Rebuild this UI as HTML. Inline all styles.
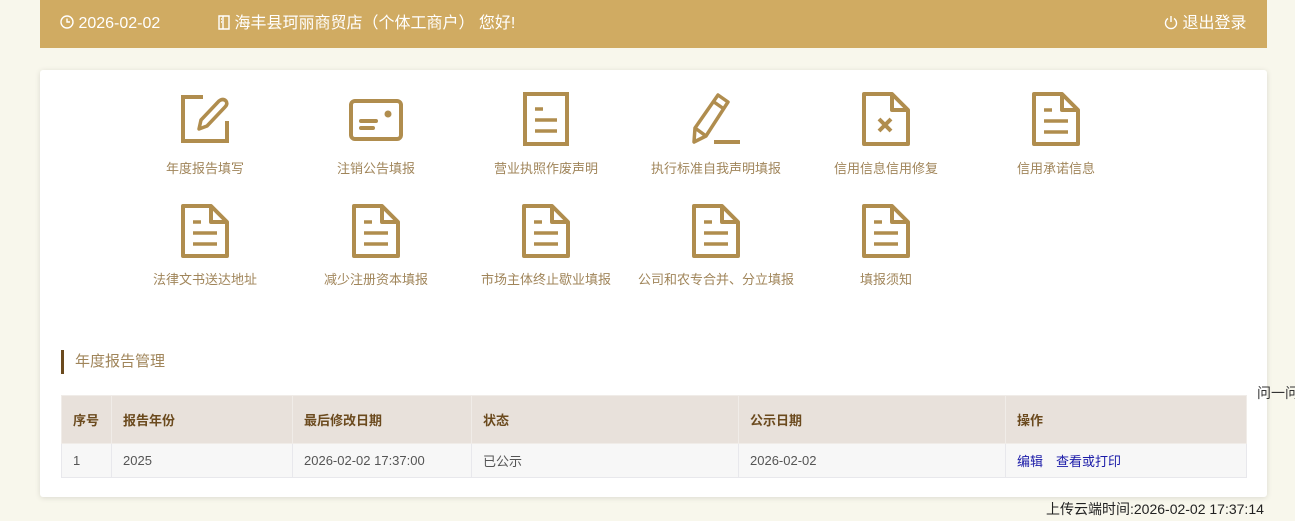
<!DOCTYPE html>
<html><head><meta charset="utf-8"><style>
*{margin:0;padding:0;box-sizing:border-box}
body{width:1295px;height:521px;background:#f8f7ec;font-family:"Liberation Sans","Microsoft YaHei","Noto Sans CJK SC",sans-serif;position:relative;overflow:hidden}
.hd{position:absolute;left:40px;top:0;width:1227px;height:48px;background:#d0ab62;color:#fff;font-size:16px}
.hd span{position:absolute;top:14px;line-height:20px}
.card{position:absolute;left:40px;top:70px;width:1227px;height:427px;background:#fff;border-radius:3px;box-shadow:0 1px 6px rgba(0,0,0,.12)}
.it{position:absolute;width:170px;text-align:center;color:#a0855a;font-size:13px}
.it svg{display:block;margin:0 auto}
.it .lb{position:absolute;left:0;width:170px;text-align:center}
.sec{position:absolute;left:21px;top:280px;height:24px;border-left:3px solid #6b4a1e;padding-left:11px;font-size:15px;color:#a0855a;line-height:24px}
table{position:absolute;left:21px;top:325px;border-collapse:collapse;font-size:13px}
th{background:#e8e1db;color:#6b4a1e;text-align:left;font-weight:bold;height:48px;padding-left:11px;border:1px solid #f0ece8}
td{background:#f7f7f7;color:#555;height:34px;padding-left:11px;border:1px solid #e8e8ec}
a{color:#1a1aa8;text-decoration:none;margin-right:13px}
</style></head><body>
<div class="hd">
<span style="left:20px"><svg width="14" height="14" viewBox="0 0 14 14" style="vertical-align:-1px"><circle cx="7" cy="7" r="6" fill="none" stroke="#fff" stroke-width="1.4"/><path d="M7 3.5V7H10" fill="none" stroke="#fff" stroke-width="1.4"/></svg> 2026-02-02</span>
<span style="left:178px"><svg width="12" height="15" viewBox="0 0 12 15" style="vertical-align:-2px"><path d="M1 1H11V14H1Z M5 1V14 M3 4H4 M3 7H4" fill="none" stroke="#fff" stroke-width="1.4"/></svg> 海丰县珂丽商贸店（个体工商户） 您好!</span>
<span style="left:1124px"><svg width="14" height="15" viewBox="0 0 14 15" style="vertical-align:-2px"><path d="M4 3.5A5.5 5.5 0 1 0 10 3.5 M7 1V7" fill="none" stroke="#fff" stroke-width="1.4"/></svg> 退出登录</span>
</div>
<div class="card">
<div class="it" style="left:80px;top:25px"><svg width="48" height="48" viewBox="0 0 48 48"><path d="M22 2H2V46H46V26" fill="none" stroke="#b08d4e" stroke-width="4"/><path d="M18 34L20 25L38 6Q42 3 45 6Q47 9 44 12L26 31Z" fill="none" stroke="#b08d4e" stroke-width="3.5" stroke-linejoin="round"/></svg><div class="lb" style="top:63px">年度报告填写</div></div>
<div class="it" style="left:251px;top:29px"><svg width="54" height="42" viewBox="0 0 54 42"><rect x="2" y="2" width="50" height="38" rx="4" fill="none" stroke="#b08d4e" stroke-width="4"/><path d="M12 22H27M12 29H24" stroke="#b08d4e" stroke-width="4" stroke-linecap="round"/><circle cx="39" cy="15" r="3.5" fill="#b08d4e"/></svg><div class="lb" style="top:59px">注销公告填报</div></div>
<div class="it" style="left:421px;top:22px"><svg width="46" height="54" viewBox="0 0 46 54"><rect x="2" y="2" width="42" height="50" fill="none" stroke="#b08d4e" stroke-width="4"/><path d="M12 17H20M12 28H34M12 39H34" stroke="#b08d4e" stroke-width="3.5"/></svg><div class="lb" style="top:66px">营业执照作废声明</div></div>
<div class="it" style="left:591px;top:22px"><svg width="52" height="54" viewBox="0 0 52 54"><path d="M28 3L38 10L16 44L4 50L5 36Z M5 36L16 44 M24 10L34 17" fill="none" stroke="#b08d4e" stroke-width="3.5" stroke-linejoin="round"/><path d="M24 50H50" stroke="#b08d4e" stroke-width="4"/></svg><div class="lb" style="top:66px">执行标准自我声明填报</div></div>
<div class="it" style="left:761px;top:22px"><svg width="48" height="54" viewBox="0 0 48 54"><path d="M2 2H30L46 18V52H2Z M30 2V18H46" fill="none" stroke="#b08d4e" stroke-width="4" stroke-linejoin="round"/><path d="M17 27L29 39M29 27L17 39" stroke="#b08d4e" stroke-width="4"/></svg><div class="lb" style="top:66px">信用信息信用修复</div></div>
<div class="it" style="left:931px;top:22px"><svg width="48" height="54" viewBox="0 0 48 54"><path d="M2 2H30L46 18V52H2Z M30 2V18H46" fill="none" stroke="#b08d4e" stroke-width="4" stroke-linejoin="round"/><path d="M12 18H20M12 29H36M12 40H36" stroke="#b08d4e" stroke-width="3.5"/></svg><div class="lb" style="top:66px">信用承诺信息</div></div>
<div class="it" style="left:80px;top:134px"><svg width="48" height="54" viewBox="0 0 48 54"><path d="M2 2H30L46 18V52H2Z M30 2V18H46" fill="none" stroke="#b08d4e" stroke-width="4" stroke-linejoin="round"/><path d="M12 18H20M12 29H36M12 40H36" stroke="#b08d4e" stroke-width="3.5"/></svg><div class="lb" style="top:65px">法律文书送达地址</div></div>
<div class="it" style="left:251px;top:134px"><svg width="48" height="54" viewBox="0 0 48 54"><path d="M2 2H30L46 18V52H2Z M30 2V18H46" fill="none" stroke="#b08d4e" stroke-width="4" stroke-linejoin="round"/><path d="M12 18H20M12 29H36M12 40H36" stroke="#b08d4e" stroke-width="3.5"/></svg><div class="lb" style="top:65px">减少注册资本填报</div></div>
<div class="it" style="left:421px;top:134px"><svg width="48" height="54" viewBox="0 0 48 54"><path d="M2 2H30L46 18V52H2Z M30 2V18H46" fill="none" stroke="#b08d4e" stroke-width="4" stroke-linejoin="round"/><path d="M12 18H20M12 29H36M12 40H36" stroke="#b08d4e" stroke-width="3.5"/></svg><div class="lb" style="top:65px">市场主体终止歇业填报</div></div>
<div class="it" style="left:591px;top:134px"><svg width="48" height="54" viewBox="0 0 48 54"><path d="M2 2H30L46 18V52H2Z M30 2V18H46" fill="none" stroke="#b08d4e" stroke-width="4" stroke-linejoin="round"/><path d="M12 18H20M12 29H36M12 40H36" stroke="#b08d4e" stroke-width="3.5"/></svg><div class="lb" style="top:65px">公司和农专合并、分立填报</div></div>
<div class="it" style="left:761px;top:134px"><svg width="48" height="54" viewBox="0 0 48 54"><path d="M2 2H30L46 18V52H2Z M30 2V18H46" fill="none" stroke="#b08d4e" stroke-width="4" stroke-linejoin="round"/><path d="M12 18H20M12 29H36M12 40H36" stroke="#b08d4e" stroke-width="3.5"/></svg><div class="lb" style="top:65px">填报须知</div></div>

<div class="sec">年度报告管理</div>
<table>
<tr><th style="width:50px">序号</th><th style="width:181px">报告年份</th><th style="width:179px">最后修改日期</th><th style="width:267px">状态</th><th style="width:267px">公示日期</th><th style="width:241px">操作</th></tr>
<tr><td>1</td><td>2025</td><td>2026-02-02 17:37:00</td><td>已公示</td><td>2026-02-02</td><td><a>编辑</a><a>查看或打印</a></td></tr>
</table>
</div>
<div style="position:absolute;left:1257px;top:383px;font-size:14px;color:#333;white-space:nowrap">问一问</div>
<div style="position:absolute;left:1046px;top:499px;font-size:14px;color:#222;white-space:nowrap">上传云端时间:2026-02-02 17:37:14</div>
</body></html>
